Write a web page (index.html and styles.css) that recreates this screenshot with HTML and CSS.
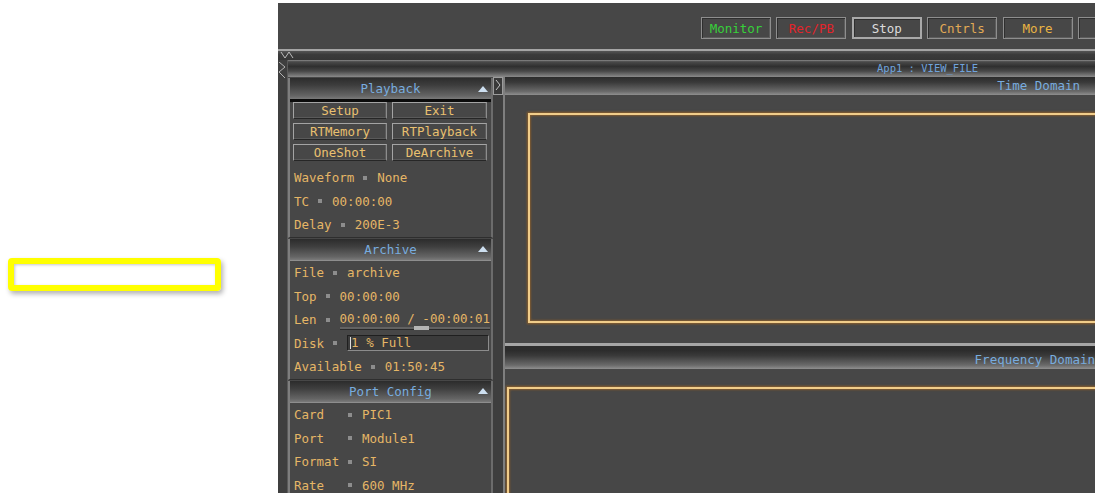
FILE: index.html
```html
<!DOCTYPE html>
<html lang="en">
<head>
<meta charset="utf-8">
<title>App1 : VIEW_FILE</title>
<link rel="stylesheet" href="styles.css">
</head>
<body>
<div class="page">
  <aside class="blank">
    <div class="marker"></div>
  </aside>

  <div class="app">
    <header class="toolbar">
      <button class="tb tb-green">Monitor</button>
      <button class="tb tb-red">Rec/PB</button>
      <button class="tb tb-stop">Stop</button>
      <button class="tb tb-orange">Cntrls</button>
      <button class="tb tb-yellow">More</button>
      <button class="tb tb-yellow" aria-label="Help"></button>
    </header>

    <div class="divider">
      <svg class="grip-h" width="14" height="8" viewBox="0 0 14 8"><polyline points="1,1 5,7 9,1 13,7" fill="none" stroke="#bcbcbc" stroke-width="1"/></svg>
    </div>

    <div class="workspace">
      <div class="gutter">
        <svg class="grip-v" width="8" height="17" viewBox="0 0 8 17"><polyline points="1,0 7,5 1,10 7,16" fill="none" stroke="#b4b4b4" stroke-width="1"/></svg>
      </div>

      <div class="main">
        <div class="titlebar">App1 : VIEW_FILE</div>

        <div class="panes">
          <div class="side">
            <section class="group group-active">
              <div class="group-head"><span></span><span class="group-title">Playback</span><span class="caret"></span></div>
              <div class="btn-grid">
                <button class="pb">Setup</button>
                <button class="pb">Exit</button>
                <button class="pb">RTMemory</button>
                <button class="pb">RTPlayback</button>
                <button class="pb">OneShot</button>
                <button class="pb">DeArchive</button>
              </div>
              <div class="fields fields-top">
                <div class="field"><span>Waveform</span><i class="dot"></i><span>None</span></div>
                <div class="field"><span>TC</span><i class="dot"></i><span>00:00:00</span></div>
                <div class="field"><span>Delay</span><i class="dot"></i><span>200E-3</span></div>
              </div>
            </section>

            <section class="group">
              <div class="group-head"><span></span><span class="group-title">Archive</span><span class="caret"></span></div>
              <div class="fields">
                <div class="field"><span>File</span><i class="dot"></i><span>archive</span></div>
                <div class="field"><span>Top</span><i class="dot"></i><span>00:00:00</span></div>
                <div class="field"><span>Len</span><i class="dot"></i><span class="slider-val">00:00:00 / -00:00:01</span></div>
                <div class="field"><span>Disk</span><i class="dot"></i><span class="disk"><i class="text-caret"></i>1 % Full</span></div>
                <div class="field"><span>Available</span><i class="dot"></i><span>01:50:45</span></div>
              </div>
            </section>

            <section class="group">
              <div class="group-head"><span></span><span class="group-title">Port Config</span><span class="caret"></span></div>
              <div class="fields fields-cols">
                <div class="field"><span class="f-label">Card</span><i class="dot"></i><span>PIC1</span></div>
                <div class="field"><span class="f-label">Port</span><i class="dot"></i><span>Module1</span></div>
                <div class="field"><span class="f-label">Format</span><i class="dot"></i><span>SI</span></div>
                <div class="field"><span class="f-label">Rate</span><i class="dot"></i><span>600 MHz</span></div>
              </div>
            </section>
          </div>

          <div class="splitter">
            <svg class="grip-s" width="10" height="18" viewBox="0 0 10 18"><rect x="0.5" y="0.5" width="9" height="17" fill="#3a3a3a" stroke="#9c9c9c"/><polyline points="3,3 7,8 3,13" fill="none" stroke="#c4c4c4" stroke-width="1"/></svg>
          </div>

          <div class="views">
            <div class="view view-time">
              <div class="view-head">Time Domain</div>
              <div class="view-body"><div class="plot"></div></div>
            </div>
            <div class="view-rule"></div>
            <div class="view view-freq">
              <div class="view-head">Frequency Domain</div>
              <div class="view-body"><div class="plot"></div></div>
            </div>
          </div>
        </div>
      </div>
    </div>
  </div>
</div>
</body>
</html>
```

FILE: styles.css
```css
* { box-sizing: border-box; }

body {
  margin: 0;
  background: #ffffff;
  font-family: "DejaVu Sans Mono", "Liberation Mono", monospace;
  font-size: 12.5px;
}

.page {
  display: flex;
  height: 493px;
  overflow: hidden;
}

/* empty white strip with the yellow marker frame */
.blank {
  flex: none;
  width: 278px;
}

.marker {
  margin: 258px 0 0 8px;
  width: 213px;
  height: 33px;
  border: 6px solid #ffff00;
  border-radius: 4px;
  box-shadow: 2px 3px 5px rgba(0, 0, 0, 0.3), inset 1px 1px 3px rgba(0, 0, 0, 0.22);
}

/* application window */
.app {
  flex: 1;
  min-width: 0;
  margin-top: 3px;
  height: 490px;
  background: #474747;
  display: flex;
  flex-direction: column;
  overflow: hidden;
}

.toolbar {
  flex: none;
  height: 46px;
  padding: 14px 0 0 423px;
  display: flex;
  align-items: flex-start;
  gap: 5.4px;
  white-space: nowrap;
}

.tb {
  flex: none;
  width: 70px;
  height: 22px;
  padding: 0;
  font: 12.5px "DejaVu Sans Mono", "Liberation Mono", monospace;
  background: #474747;
  border: 1px solid #8e8e8e;
  box-shadow: inset 1px 1px 0 #2f2f2f, inset -1px -1px 0 #5c5c5c;
  color: #dddddd;
}

.tb-green { color: #37d03a; }
.tb-red { color: #e3242a; }
.tb-orange { color: #e2aa55; }
.tb-yellow { color: #eab443; }
.tb-stop {
  border: 2px solid #a9a9a9;
  box-shadow: inset 1px 1px 0 #2f2f2f;
  color: #dcdcdc;
}

.divider {
  flex: none;
  height: 11px;
  border-top: 2px solid #a5a5a5;
  background: linear-gradient(#555555, #3b3b3b 40%, #363636);
  padding-left: 2px;
}

.grip-h { display: block; }

.workspace {
  flex: 1;
  min-height: 0;
  display: flex;
}

.gutter {
  flex: none;
  width: 10px;
  padding-top: 2px;
  background: #3f3f3f;
  border-right: 1px solid #5a5a5a;
}

.grip-v { display: block; }

.main {
  flex: 1;
  min-width: 0;
  display: flex;
  flex-direction: column;
}

.titlebar {
  flex: none;
  height: 17px;
  line-height: 17px;
  padding-left: 589px;
  font-size: 10.5px;
  color: #6fa3dc;
  white-space: nowrap;
  background: linear-gradient(#8c8c8c 0, #4a4a4a 10%, #2f2f2f 38%, #474747 65%, #8a8a8a 100%);
}

.panes {
  flex: 1;
  min-height: 0;
  display: flex;
}

/* left control column */
.side {
  flex: none;
  width: 205px;
  padding-top: 1px;
  display: flex;
  flex-direction: column;
  gap: 1px;
}

.group {
  border-left: 2px solid #7e7e7e;
  border-right: 2px solid #6c6c6c;
  border-bottom: 1px solid #2e2e2e;
}

.group-head {
  height: 22px;
  border-bottom: 1px solid #8e8e8e;
  display: grid;
  grid-template-columns: 1fr auto 1fr;
  align-items: center;
  color: #78acdf;
  background: linear-gradient(#2c2c2c, #3e3e3e 35%, #656565 85%, #7a7a7a);
}

.group-active .group-head {
  height: 24px;
  border-bottom: 3px solid #0b0b0b;
}

.caret {
  justify-self: end;
  margin-right: 3px;
  width: 0;
  height: 0;
  border-left: 5px solid transparent;
  border-right: 5px solid transparent;
  border-bottom: 6px solid #cddff0;
}

.btn-grid {
  display: grid;
  grid-template-columns: 94px 95px;
  column-gap: 5px;
  row-gap: 4px;
  padding: 0 4px 0 3px;
}

.pb {
  height: 17px;
  padding: 0;
  font: 12.5px "DejaVu Sans Mono", "Liberation Mono", monospace;
  color: #e9c070;
  background: #474747;
  border: 1px solid;
  border-color: #a4a4a4 #8c8c8c #262626 #a4a4a4;
  box-shadow: inset -1px -1px 0 #5a5a5a;
}

.fields { padding-left: 4px; }
.fields-top { padding-top: 5px; }

.field {
  height: 23.6px;
  display: flex;
  align-items: center;
  color: #e5b666;
  white-space: nowrap;
}

.dot {
  flex: none;
  width: 4px;
  height: 4px;
  margin: 0 10px 0 9px;
  background: #8d8d8d;
}

.fields-cols .f-label {
  width: 45px;
}

.slider-val {
  position: relative;
  padding-bottom: 1px;
  border-bottom: 2px solid #626262;
  box-shadow: 0 1px 0 #2a2a2a;
}

.slider-val::after {
  content: "";
  position: absolute;
  left: 74px;
  bottom: -3px;
  width: 15px;
  height: 4px;
  background: #b5b5b5;
}

.disk {
  flex: 1;
  margin-right: 2px;
  height: 16px;
  line-height: 14px;
  padding-left: 2px;
  background: #3b3b3b;
  border: 1px solid;
  border-color: #1f1f1f #8c8c8c #8c8c8c #1f1f1f;
}

.text-caret {
  display: inline-block;
  width: 1px;
  height: 12px;
  vertical-align: -2px;
  background: #dcdcdc;
}

/* splitter between columns */
.splitter {
  flex: none;
  width: 12px;
  background: #3e3e3e;
  border-right: 2px solid #7f7f7f;
}

.grip-s { display: block; }

/* plot views */
.views {
  flex: 1;
  min-width: 0;
  display: flex;
  flex-direction: column;
  overflow: hidden;
}

.view-head {
  height: 18px;
  line-height: 18px;
  padding-right: 15px;
  text-align: right;
  color: #78acdf;
  white-space: nowrap;
  background: linear-gradient(#2b2b2b, #3a3a3a 30%, #6a6a6a 80%, #8f8f8f);
}

.view-body {
  padding-top: 18px;
}

.view-time .view-body { height: 248px; }

.plot {
  border: 2px solid #f1cd8a;
  box-shadow: 0 0 2px 1px rgba(170, 105, 30, 0.7), inset 0 0 2px 1px rgba(170, 105, 30, 0.6);
}

.view-time .plot {
  margin: 0 -40px 0 23px;
  height: 210px;
}

.view-rule {
  flex: none;
  height: 7px;
  border-top: 3px solid #a6a6a6;
  background: #2d2d2d;
}

.view-freq .view-head {
  height: 19px;
  line-height: 19px;
  padding-right: 0;
}

.view-freq .plot {
  margin: 0 -40px 0 2px;
  height: 200px;
}
```
